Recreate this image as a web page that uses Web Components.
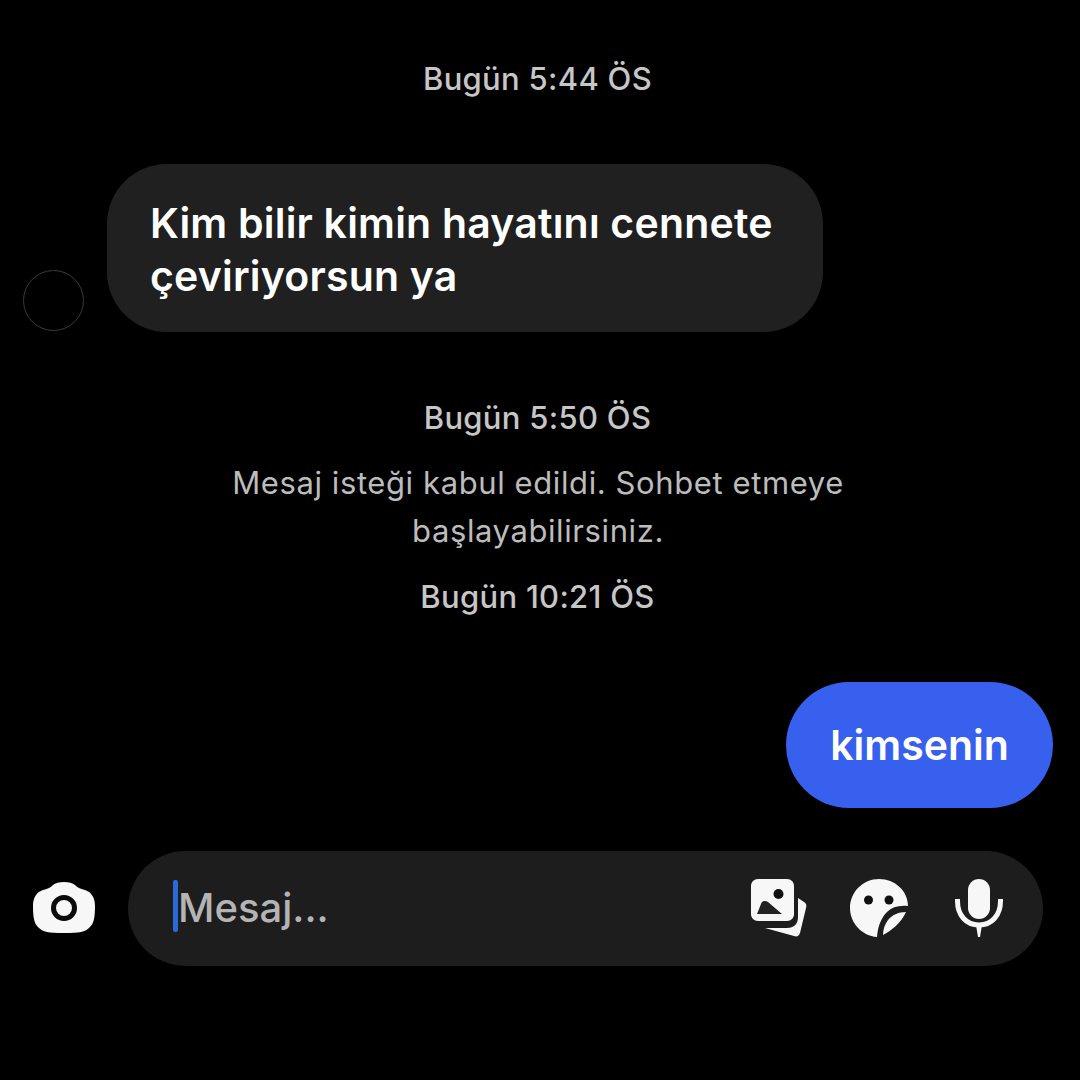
<!DOCTYPE html>
<html lang="tr"><head><meta charset="utf-8"><title>Sohbet</title>
<style>
html,body{margin:0;background:#000}
body{width:1080px;height:1080px;overflow:hidden;font-family:Inter,"Liberation Sans",Arial,sans-serif}
</style></head><body>
<chat-thread>
  <chat-stamp style="--top:64px">Bugün 5:44 ÖS</chat-stamp>
  <incoming-row style="--top:70px"><chat-avatar slot="avatar"></chat-avatar>Kim bilir kimin hayatını cennete<br>çeviriyorsun ya</incoming-row>
  <chat-stamp style="--top:71px">Bugün 5:50 ÖS</chat-stamp>
  <chat-notice style="--top:26px">Mesaj isteği kabul edildi. Sohbet etmeye<br>başlayabilirsiniz.</chat-notice>
  <chat-stamp style="--top:27px">Bugün 10:21 ÖS</chat-stamp>
  <outgoing-row style="--top:70px">kimsenin</outgoing-row>
  <composer-bar style="--top:43px"></composer-bar>
</chat-thread>
<script>
function def(name,html){customElements.define(name,class extends HTMLElement{constructor(){super();this.attachShadow({mode:'open'}).innerHTML=html}})}
def('chat-thread',`<style>:host{display:flex;flex-direction:column;width:1080px;height:1080px;background:#000}</style><slot></slot>`);
def('chat-stamp',`<style>:host{display:block;margin-top:var(--top);height:30px;line-height:30px;text-align:center;color:#c6c6c6;font-size:31px;font-weight:500;letter-spacing:.3px;padding-right:5px}</style><slot></slot>`);
def('chat-notice',`<style>:host{display:block;margin-top:var(--top);line-height:48px;text-align:center;color:#bcbcbc;font-size:31px;font-weight:400;letter-spacing:.6px;padding-right:4px}</style><slot></slot>`);
def('chat-avatar',`<style>:host{display:block;width:61px;height:61px;box-sizing:border-box;border:1.5px solid #3a3a3a;border-radius:50%}</style>`);
def('incoming-row',`<style>:host{display:flex;align-items:flex-end;gap:23px;margin-top:var(--top);padding-left:23px}
.b{box-sizing:border-box;width:716px;height:168px;padding:33px 0 0 43px;background:#202020;border-radius:60px;color:#fff;font-size:41px;font-weight:600;line-height:53px;letter-spacing:.2px;white-space:nowrap}
::slotted(chat-avatar){margin-bottom:1px}</style><slot name="avatar"></slot><div class="b"><slot></slot></div>`);
def('outgoing-row',`<style>:host{display:flex;justify-content:flex-end;margin-top:var(--top);padding-right:27px}
.b{box-sizing:border-box;width:267px;height:126px;display:flex;align-items:center;justify-content:center;background:#3860ee;border-radius:63px;color:#fff;font-size:41px;font-weight:600}</style><div class="b"><slot></slot></div>`);
def('composer-bar',`<style>:host{display:flex;align-items:center;gap:33px;margin-top:var(--top);padding-left:33px}
.cam{display:block;width:62px;height:52px;flex:none;margin-bottom:3px}
.bar{box-sizing:border-box;width:915px;height:115px;display:flex;align-items:center;background:#1d1d1d;border-radius:58px;padding:0 40px 0 45px}
.caret{width:5px;height:52px;background:#2a6ad8;border-radius:2px;flex:none;margin-bottom:6px}
.ph{flex:1;color:#b4b4b4;font-size:40px;font-weight:500;line-height:52px;margin-bottom:1px}
.ic{display:flex;align-items:center;margin-bottom:1px}
svg{display:block}
.g{margin-right:43px}.s{margin-right:47px}
</style>
<svg class="cam" viewBox="0 0 62 52"><path fill="#f7f7f7" d="M20 4C24 0 38 0 42 4C45 7 48 8 52 9C58 11 62 16 62 25C62 36 61 43 56 47C52 51 47 52 31 52C15 52 10 51 6 47C1 43 0 36 0 25C0 16 4 11 10 9C14 8 17 7 20 4Z"/><circle cx="31" cy="27" r="10.500" fill="#f7f7f7" stroke="#0c0c0c" stroke-width="5"/></svg>
<div class="bar"><span class="caret"></span><span class="ph">Mesaj...</span>
<div class="ic">
<svg class="g" width="56" height="58" viewBox="0 0 56 58"><path fill="#f7f7f7" d="M7 0H36C40 0 43 3 43 7V35C43 39 40 42 36 42H7C3 42 0 39 0 35V7C0 3 3 0 7 0Z"/><circle cx="27.500" cy="15" r="5" fill="#111"/><path fill="#222" d="M6 35L10 25C11 22 14 21 17 23L31 35Z"/><path fill="#f7f7f7" d="M47 19L53 23C55 24 56 26 55 29L49 54C48 57 46 58 43 57L14 49L36 49C43 49 47 45 47 38Z"/></svg>
<svg class="s" width="58" height="58" viewBox="0 0 58 58"><path fill="#f7f7f7" d="M29 0C45 0 58 12 58 27C49 26 42 28 37 33C31 39 28 47 27 58C12 57 0 44 0 29C0 13 13 0 29 0Z"/><path fill="#f7f7f7" d="M56 33C48 33 42 36 38 41C35 45 33 50 33 56C41 52 51 44 56 33Z"/><circle cx="18.500" cy="21" r="4.500" fill="#111"/><circle cx="39" cy="21" r="4.500" fill="#111"/></svg>
<svg width="48" height="58" viewBox="0 0 48 58"><rect x="13" y="0" width="22" height="40" rx="11" fill="#f7f7f7"/><path fill="none" stroke="#f7f7f7" stroke-width="5" d="M2.500 20V22C2.500 36 11 46 24 46C37 46 45.500 36 45.500 22V20"/><path fill="#f7f7f7" d="M21 46H27L25 58H23Z"/></svg>
</div></div>`);
</script>
</body></html>
